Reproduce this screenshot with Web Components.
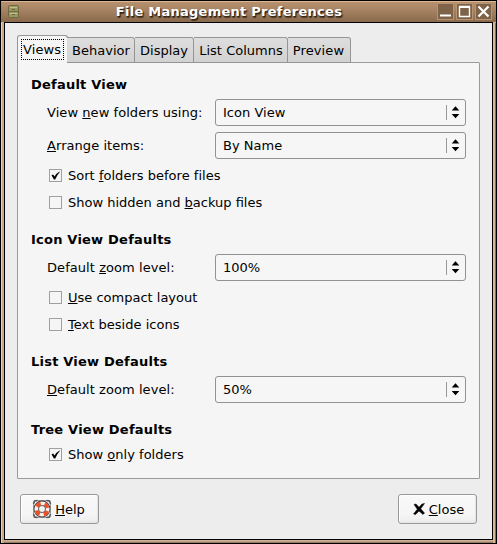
<!DOCTYPE html>
<html lang="en"><head><meta charset="utf-8"><title>File Management Preferences</title>
<style>
html,body{margin:0;height:100%;overflow:hidden}
body{font:13px/17px "DejaVu Sans",sans-serif;letter-spacing:.02px;color:#000;background:#000}
u{text-decoration:underline;text-decoration-thickness:1px;text-underline-offset:1px;text-decoration-skip-ink:none}
</style></head><body>
<pref-window caption="File Management Preferences">
 <pref-tabs>
  <pref-tab slot="tab" active>Views</pref-tab>
  <pref-tab slot="tab" style="--w:68px;padding-left:1px">Behavior</pref-tab>
  <pref-tab slot="tab" style="--w:59px">Display</pref-tab>
  <pref-tab slot="tab" style="--w:94px;padding-left:1px">List Columns</pref-tab>
  <pref-tab slot="tab" style="--w:63px;letter-spacing:.1px;padding-right:1px">Preview</pref-tab>
  <pref-section caption="Default View">
   <pref-select value="Icon View">View <u>n</u>ew folders using:</pref-select>
   <pref-select value="By Name"><u>A</u>rrange items:</pref-select>
   <pref-check class="first" checked>Sort <u>f</u>olders before files</pref-check>
   <pref-check style="letter-spacing:0">Show hidden and <u>b</u>ackup files</pref-check>
  </pref-section>
  <pref-section caption="Icon View Defaults">
   <pref-select value="100%">Default <u>z</u>oom level:</pref-select>
   <pref-check class="first" style="letter-spacing:0"><u>U</u>se compact layout</pref-check>
   <pref-check><u>T</u>ext beside icons</pref-check>
  </pref-section>
  <pref-section caption="List View Defaults" style="margin-bottom:18px">
   <pref-select value="50%"><u>D</u>efault zoom level:</pref-select>
  </pref-section>
  <pref-section caption="Tree View Defaults">
   <pref-check class="first" checked>Show <u>o</u>nly folders</pref-check>
  </pref-section>
 </pref-tabs>
 <pref-button slot="action" icon="help"><u>H</u>elp</pref-button>
 <pref-button slot="action" icon="close"><u>C</u>lose</pref-button>
</pref-window>
<script>
class Base extends HTMLElement{
  connectedCallback(){
    if(this.shadowRoot)return;
    this.attachShadow({mode:'open'}).innerHTML='<style>*{box-sizing:border-box}:host{box-sizing:border-box}'+this.css()+'</style>'+this.html();
  }
}
customElements.define('pref-window',class extends Base{
  css(){return `
  :host{display:flex;flex-direction:column;width:497px;height:544px;border:1px solid #000;padding:0 3px 3px;
   background:linear-gradient(90deg,#ecd0b5 0 1px,#c9a98a 1px 3px,transparent 3px calc(100% - 3px),#d8b897 calc(100% - 3px) calc(100% - 1px),#8b6c50 calc(100% - 1px)) 0 22px/100% 100% no-repeat,linear-gradient(#d5b190,#d5b190 538px,#ceb096 540px,#8b6c50 542px)}
  header{display:flex;align-items:center;height:21px;margin:0 -3px;padding:0 4px 0 7px;flex:none;
   background:linear-gradient(#deb593 0 1px,#b6916f 1px,#a78363 9px,#8b6b4e 20px,#8b6b4e)}
  h1{flex:1;margin:0;padding-left:1px;text-align:center;font:bold 13px/21px "DejaVu Sans",sans-serif;letter-spacing:.26px;color:#fff;text-shadow:1px 1px 1px #2d2115,1px 2px 1px #4d3a28}
  .btns{display:flex;gap:2px}
  main{flex:1;border:1px solid #000;background:#ededed;padding:12px;display:flex;flex-direction:column}
  footer{display:flex;justify-content:space-between;padding:15px 3px 0}
  svg{display:block}`}
  html(){const glyphs=[['M3 12.5h11',2],['M3.5 3.5h10v10h-10z',1.4],['M3.5 3.5l10 10M13.5 3.5l-10 10',2.2]];
  return `<header>
  <svg width="12" height="14" viewBox="0 0 12 14"><rect x=".5" y=".5" width="10" height="12" rx="1" fill="#9b9560" stroke="#6f6941"/><path d="M2 2h7v1H2zM2 8h7v1H2z" fill="#c6c08b"/><path d="M1 6.5h9" stroke="#706a40"/><path d="M4 4.5h3M4 9.5h3" stroke="#6b6640"/></svg>
  <h1>${this.getAttribute('caption')}</h1>
  <div class="btns">
  ${glyphs.map(([d,w],i)=>`<svg width="17" height="17" viewBox="0 0 17 17"><rect x=".5" y=".5" width="16" height="16" fill="#7f6349" stroke="#b89370"/><path d="${d}" fill="none" stroke="#fff" stroke-width="${w}"/>${i==1?'<path d="M3 4h11" stroke="#fff" stroke-width="2"/>':''}</svg>`).join('')}
  </div></header>
  <main><slot></slot><footer><slot name="action"></slot></footer></main>`}
});
customElements.define('pref-tabs',class extends Base{
  css(){return `:host{display:block;width:463px}
  nav{display:flex;align-items:flex-end;height:28px;margin-bottom:-1px;position:relative}
  section{height:417px;border:1px solid #9a9a9a;background:#f5f5f5;padding:13px 13px 0;border-radius:0 1px 1px 1px}`}
  html(){return `<nav><slot name="tab"></slot></nav><section><slot></slot></section>`}
});
customElements.define('pref-tab',class extends Base{
  css(){return `:host{display:flex;justify-content:center;align-items:center;width:var(--w);height:26px;border:1px solid #959595;border-left-width:0;border-radius:0 3px 0 0;background:linear-gradient(#dedede,#d2d2d2);white-space:nowrap}
  :host([active]){height:28px;border-left-width:1px;border-bottom:0;border-radius:3px 3px 0 0;background:#f5f5f5;width:51px;margin-right:-1px;justify-content:flex-start;padding-left:3px}
  :host([active]) span{border:1px dotted #000;width:43px;height:21px;line-height:19px;padding-left:1px;letter-spacing:.12px}
  `}
  html(){return `<span><slot></slot></span>`}
});
customElements.define('pref-section',class extends Base{
  css(){return `:host{display:block;margin-bottom:15px}h2{margin:0;font:bold 13px/17px "DejaVu Sans",sans-serif;letter-spacing:.22px}
  div{padding-left:16px}`}
  html(){return `<h2>${this.getAttribute('caption')}</h2><div><slot></slot></div>`}
});
customElements.define('pref-select',class extends Base{
  css(){return `:host{display:flex;align-items:center;margin-top:6px;height:27px;white-space:nowrap}
  label{width:168px;letter-spacing:.06px}
  .box{width:251px;height:27px;border:1px solid #929292;border-radius:3px;display:flex;align-items:center;padding:0 5px 0 7px;background:#f6f6f6}
  .box span{flex:1}svg{display:block}`}
  html(){return `<label><slot></slot></label><div class="box"><span>${this.getAttribute('value')}</span>
  <svg width="14" height="15" viewBox="0 0 14 15"><path d="M.5 0v15" stroke="#999"/><path d="M5.700 5.500L9.500 1.200 13.300 5.500zM5.700 9L9.500 13.300 13.300 9z"/></svg></div>`}
});
customElements.define('pref-check',class extends Base{
  css(){return `:host{display:flex;align-items:center;height:27px;padding-left:2px;gap:6px;white-space:nowrap}
  :host(.first){margin-top:3px}svg{display:block}`}
  html(){return `<svg width="13" height="13" viewBox="0 0 13 13"><rect x=".5" y=".5" width="12" height="12" fill="#f5f5f5" stroke="#a0a0a0"/>${this.hasAttribute('checked')?'<path d="M2.500 6.200L4.200 5.600 5.500 7.600Q7.500 4.200 10.500 2.500L10.800 3Q8 6 6.200 10.400H4.900Z"/>':''}</svg><span><slot></slot></span>`}
});
customElements.define('pref-button',class extends Base{
  css(){return `:host{display:flex;align-items:center;justify-content:center;width:79px;height:30px;border:1px solid #999;border-radius:3px;background:linear-gradient(#f9f9f9,#f5f5f5 70%,#ececec);box-shadow:inset -1px -1px 1px #e4e4e4,inset 1px 1px #fff;gap:2px}
  :host([icon=help]){gap:3px;padding-right:2px}
  svg{display:block}`}
  html(){return this.getAttribute('icon')=='help'?`<svg width="20" height="20" viewBox="0 0 20 20"><rect x="1.500" y="1.500" width="17" height="17" rx="3" fill="none" stroke="#999"/><path d="M1.500 5L2.500 2 5.500 1.500M14.500 1.500L17.500 2 18.500 5M18.500 15L17.500 18 14.500 18.500M5.500 18.500L2.500 18 1.500 15" fill="none" stroke="#555" stroke-width="1.500"/><circle cx="10" cy="10" r="8.400" fill="#3c3430"/><circle cx="10" cy="10" r="5.700" fill="none" stroke="#f4f2f0" stroke-width="3.800"/><circle cx="10" cy="10" r="5.700" fill="none" stroke="#ec5128" stroke-width="3.800" stroke-dasharray="4.800 4.154" stroke-dashoffset="-2.077"/><circle cx="10" cy="10" r="3.500" fill="#f5f5f5" stroke="#665c56" stroke-width=".9"/></svg><span><slot></slot></span>`:
  `<svg width="16" height="16" viewBox="0 0 16 16"><path d="M3 3.500L5 3 8 6.200 11 3 13.500 2.500 9.700 7.800 13.500 12 12 13.500 8 10 4.600 13.500 2.500 13 6.300 8.200Z" stroke="#000" stroke-width=".5"/></svg><span><slot></slot></span>`}
});
</script></body></html>
